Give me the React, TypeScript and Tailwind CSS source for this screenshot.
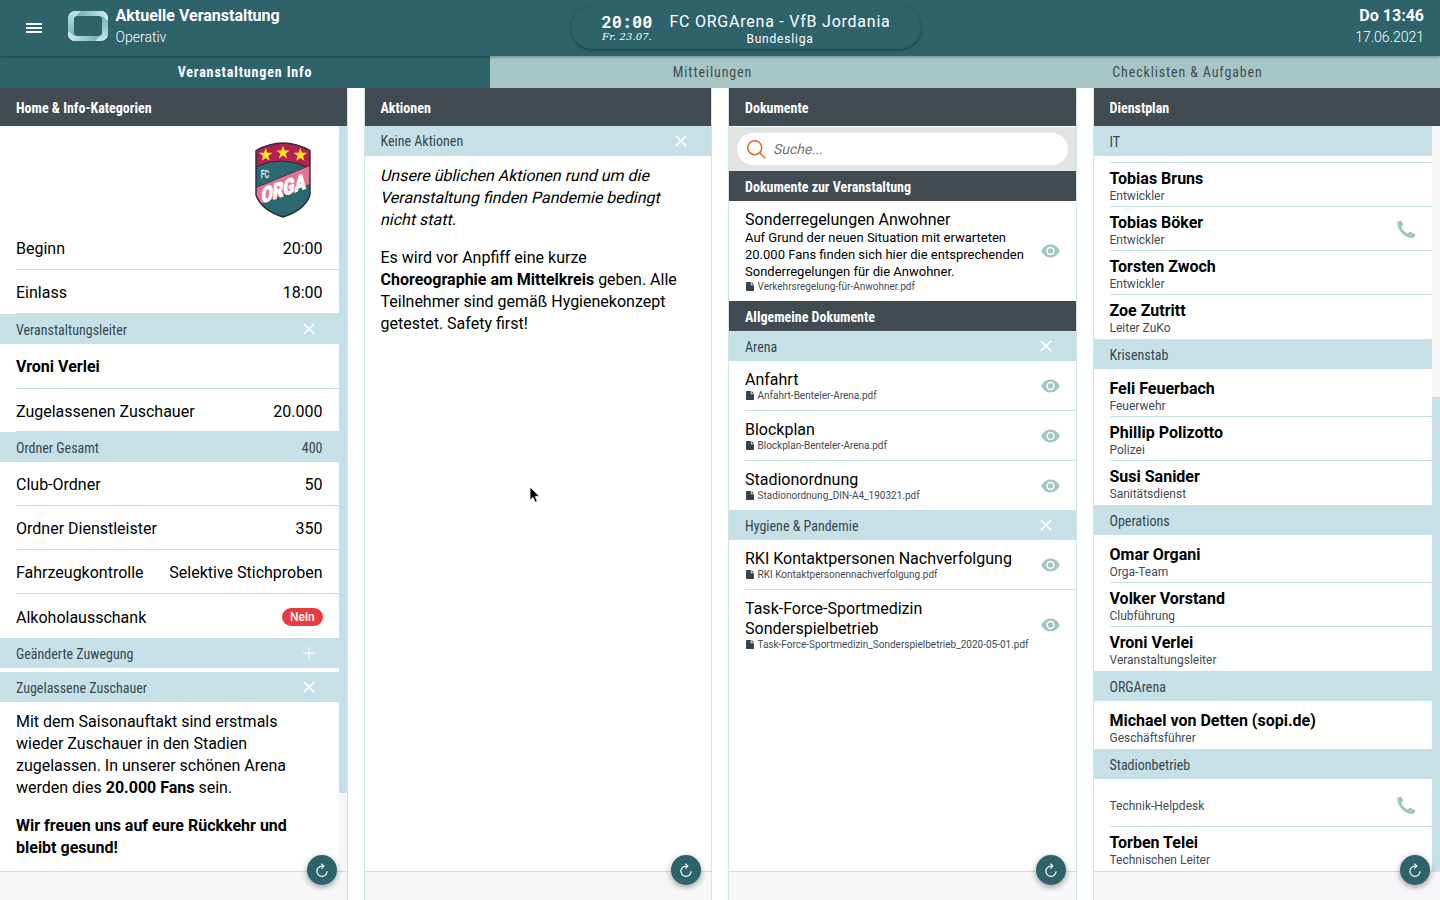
import React from "react";

const COND = "font-['Roboto_Condensed',Roboto,sans-serif] [font-stretch:75%]";

function Cross() {
  return (
    <svg width="12" height="12" viewBox="0 0 12 12" className="mr-[8px]" fill="none" stroke="#fff" strokeWidth="1.7">
      <path d="M.8.8l10.400 10.400M11.200.8L.8 11.200" />
    </svg>
  );
}

function Plus() {
  return (
    <svg width="12" height="12" viewBox="0 0 12 12" className="mr-[8px] mb-px" fill="none" stroke="#fff" strokeOpacity="0.85" strokeWidth="1.4">
      <path d="M6 0v12M0 6h12" />
    </svg>
  );
}

function Bar({ title, children, pt = "pt-[2px]" }: { title: string; children?: React.ReactNode; pt?: string }) {
  return (
    <div className="flex h-[30px] shrink-0 items-center justify-between bg-[#c5e1e7] pr-4 pl-(--inset) text-[14px] text-[#37474f]">
      <span className={`${COND} ${pt}`}>{title}</span>
      {children}
    </div>
  );
}

function DarkBar({ title }: { title: string }) {
  return (
    <div className={`flex h-[30px] shrink-0 items-center bg-[#424b52] pt-[2px] pl-4 text-[14px] font-bold text-white ${COND}`}>
      {title}
    </div>
  );
}

function Row({ label, value, h = "h-[44px]", pt = "pt-[2px]", bold, last }: { label: string; value?: React.ReactNode; h?: string; pt?: string; bold?: boolean; last?: boolean }) {
  return (
    <div className={`ml-4 flex shrink-0 items-center justify-between pr-[16.5px] ${pt} ${h} ${last ? "" : "border-b border-[#c5e3e3]"} ${bold ? "font-bold" : ""}`}>
      <span>{label}</span>
      <span>{value}</span>
    </div>
  );
}

function Eye() {
  return (
    <svg width="19" height="14" viewBox="0 0 19 14" className="mr-[16.5px] shrink-0">
      <path d="M.3 7C2.2 3 5.500.6 9.500.6S16.800 3 18.700 7c-1.900 4-5.200 6.400-9.200 6.400S2.200 11 .3 7z" fill="#a5c5c4" />
      <circle cx="9.500" cy="7" r="3.400" fill="none" stroke="#fff" strokeWidth="1.500" />
    </svg>
  );
}

function Phone() {
  return (
    <svg width="19" height="19" viewBox="0 0 19 19" className="mt-[8px] mr-[16.5px] shrink-0" fill="#a5c5c4">
      <path d="M1 1.600L3.100.6c.7-.3 1.400 0 1.700.7l1.300 3c.2.600 0 1.100-.4 1.500L4.400 7c1.100 2.600 3.300 5 6.200 6.400l1.600-1.200c.4-.3.900-.4 1.400-.2l4 1.800c.7.300 1 1.100.7 1.700l-.9 1.600c-.4.700-1.100 1-1.800 1C7.600 17.800.4 10.400.2 3.200c0-.7.200-1.300.8-1.600z" />
    </svg>
  );
}

function Doc({ title, text, file, h, last }: { title: string; text?: string; file: string; h: string; last?: boolean }) {
  return (
    <div className={`ml-4 flex shrink-0 items-center justify-between ${h} ${last ? "" : "border-b border-[#c5e3e3]"}`}>
      <div className="pt-px">
        <div className="max-w-[280px] leading-[20px]">{title}</div>
        {text && <div className="-mt-px mb-px w-[290px] text-[13px] leading-[17px]">{text}</div>}
        <div className="flex h-[12px] items-center text-[10px] leading-[12px] whitespace-nowrap text-[#424b52]">
          <svg width="8" height="9" viewBox="0 0 8 9" className="mr-[3.5px] mb-px ml-[1px] shrink-0" fill="#37434b">
            <path d="M.8 0h4v3.300H8v5.100c0 .4-.3.600-.6.600H.8C.3 9 0 8.700 0 8.300V.7C0 .3.300 0 .8 0zM5.600 0L8 2.500H5.600z" />
          </svg>
          {file}
        </div>
      </div>
      <Eye />
    </div>
  );
}

function Person({ name, role, phone, last, first, h = "h-[44px]" }: { name?: string; role: string; phone?: boolean; last?: boolean; first?: boolean; h?: string }) {
  return (
    <div className={`ml-4 flex shrink-0 items-start justify-between ${first ? "pt-[9px]" : "pt-[5px]"} ${h} ${last ? "" : "border-b border-[#c5e3e3]"}`}>
      <div className="-ml-[0.5px]">
        {name && <div className="-mb-[2px] leading-[22px] font-bold">{name}</div>}
        <div className={`text-[12px] leading-[16px] text-[#424b52] ${name ? "" : "mt-[10px]"}`}>{role}</div>
      </div>
      {phone && <Phone />}
    </div>
  );
}

function Column({ title, children, last, thumb, first, inset = "[--inset:16px]" }: { title: string; children: React.ReactNode; first?: boolean; last?: boolean; thumb?: React.ReactNode; inset?: string }) {
  return (
    <section className={`flex min-h-0 min-w-0 flex-col border-[#cfe6e6] bg-white ${inset} ${first ? "" : "border-l"} ${last ? "" : "border-r"}`}>
      <h2 className={`flex h-[38px] shrink-0 items-center bg-[#424b52] pt-[2px] pl-(--inset) text-[14px] font-bold text-white ${COND}`}>{title}</h2>
      <div className="flex h-[745px] shrink-0">
        <div className="flex min-w-0 flex-1 flex-col overflow-hidden">{children}</div>
        {thumb}
      </div>
      <footer className="flex flex-1 justify-end border-t border-[#c5e3e3] bg-[#f7f7fa] pr-[10px]">
        <button className="relative -top-[17px] flex size-[30px] items-center justify-center rounded-full bg-[#2f636c] shadow-[0_2px_6px_rgba(0,0,0,0.4)]">
          <svg width="14" height="14" viewBox="0 0 14 14" fill="none" stroke="#fff" strokeWidth="1.200">
            <path d="M7.900 3.100H7a5.100 5.100 0 1 0 5.100 5.100" />
            <path d="M6.300.6l2.500 2.500-2.500 2.500" />
          </svg>
        </button>
      </footer>
    </section>
  );
}

function Slanted({ children }: { children: React.ReactNode }) {
  return <span className="-ml-px block origin-[0_16px] -skew-x-[13deg]">{children}</span>;
}

function Crest() {
  return (
    <svg width="56" height="76" viewBox="0 0 56 76" className="overflow-visible">
      <defs>
        <clipPath id="shield">
          <path d="M1 8.500Q28-6.500 55 8.500V53Q50 68 28 75Q6 68 1 53z" />
        </clipPath>
      </defs>
      <g clipPath="url(#shield)">
        <path d="M0 0h56v76H0z" fill="#2b6871" />
        <path d="M0 0h56v27Q28 12 0 25z" fill="#b51f52" stroke="#262b35" strokeWidth="1" />
        <path d="M0 46L56 23V42L0 65z" fill="#e8718d" stroke="#3a3040" strokeWidth=".8" />
      </g>
      <path d="M1 8.500Q28-6.500 55 8.500V53Q50 68 28 75Q6 68 1 53z" fill="none" stroke="#25303a" strokeWidth="1.400" />
      <g fill="#ffe71a">
        <path id="star" d="M10.700 6l1.700 4.700 5 .1-4 3.100 1.400 4.800-4.100-2.800-4.100 2.800L8 13.900l-4-3.100 5-.1z" />
        <use href="#star" x="17.300" y="-2.300" />
        <use href="#star" x="34.600" />
      </g>
      <text x="5.700" y="35.500" fontSize="11" fill="#d7e6e8" stroke="#d7e6e8" strokeWidth=".3" textLength="8.500" lengthAdjust="spacingAndGlyphs" fontFamily="Roboto" fontWeight="500">FC</text>
      <text transform="translate(6.500 61.500) skewY(-19) skewX(-2)" fontSize="21.500" fill="#fff" stroke="#fff" strokeWidth=".9" textLength="44" lengthAdjust="spacingAndGlyphs" fontFamily="Roboto" fontWeight="900">ORGA</text>
    </svg>
  );
}

function BrandMark() {
  return (
    <svg width="40" height="30" viewBox="0 0 40 30">
      <defs>
        <linearGradient id="ga" x1="0" x2="1"><stop offset="0" stopColor="#6fabb6" /><stop offset="1" stopColor="#d0e9ee" /></linearGradient>
        <linearGradient id="gb" x1="1" x2="0"><stop offset="0" stopColor="#6fabb6" /><stop offset="1" stopColor="#d0e9ee" /></linearGradient>
        <linearGradient id="gc" x1="0" x2="0" y1="0" y2="1"><stop offset="0" stopColor="#75b0bb" /><stop offset="1" stopColor="#c4e3e9" /></linearGradient>
        <linearGradient id="gd" x1="0" x2="0" y1="0" y2="1"><stop offset="0" stopColor="#c4e3e9" /><stop offset="1" stopColor="#75b0bb" /></linearGradient>
        <clipPath id="ring"><path clipRule="evenodd" d="M7 0h26a7 7 0 0 1 7 7v16a7 7 0 0 1-7 7H7a7 7 0 0 1-7-7V7a7 7 0 0 1 7-7zM9 5a3 3 0 0 0-3 3v14a3 3 0 0 0 3 3h22a3 3 0 0 0 3-3V8a3 3 0 0 0-3-3z" /></clipPath>
      </defs>
      <g clipPath="url(#ring)">
        <path d="M0 0h40v30H0z" fill="#c4e3e9" />
        <path d="M13 0h27v10l-8-5H8z" fill="url(#ga)" />
        <path d="M34 5l6 5v13l-7 7-2-5 3-3z" fill="url(#gc)" />
        <path d="M27 30H0V20l8 5h24z" fill="url(#gb)" />
        <path d="M6 25l-6-5V7l7-7h6L6 7z" fill="url(#gd)" />
      </g>
    </svg>
  );
}

export default function App() {
  return (
    <div className="relative flex h-[900px] w-[1440px] flex-col overflow-hidden bg-white font-[Roboto,sans-serif] text-[16px] leading-[22px] text-black">
      <header className="relative z-10 flex h-[56px] shrink-0 bg-[#2f636c] text-white shadow-[0_1px_3px_rgba(0,0,0,0.35)]">
        <div className="flex w-[571px]">
          <svg width="16" height="12" viewBox="0 0 16 12" className="mt-[22px] ml-[26px]" fill="#fff">
            <path d="M0 1h16v2H0zM0 5h16v2H0zM0 9h16v2H0z" />
          </svg>
          <div className="mt-[11px] ml-[26px]"><BrandMark /></div>
          <div className="ml-[7.5px] pt-[5px]">
            <div className="leading-[22px] font-bold">Aktuelle Veranstaltung</div>
            <div className="text-[14px] leading-[20px] font-light">Operativ</div>
          </div>
        </div>
        <div className="mt-[6px] flex h-[43px] w-[350px] rounded-[22px] shadow-[0_1px_3px_rgba(0,0,0,0.45)]">
          <div className="ml-[29px] w-[54px] pt-[6px] text-center">
            <div className="font-['Roboto_Mono','Liberation_Mono',monospace] text-[17px] leading-[20px] font-bold">20:00</div>
            <div className="-mt-px font-['DejaVu_Serif',serif] text-[10px] leading-[12px] tracking-[0.1px] whitespace-nowrap italic">Fr. 23.07.</div>
          </div>
          <div className="ml-[12px] w-[228px] pt-[5px] text-center whitespace-nowrap">
            <div className="leading-[22px] tracking-[0.77px]">FC ORGArena - VfB Jordania</div>
            <div className="text-[12px] leading-[13px] tracking-[0.8px]">Bundesliga</div>
          </div>
        </div>
        <div className="ml-auto pt-[5px] pr-4 text-right">
          <div className="leading-[22px] font-bold">Do 13:46</div>
          <div className="text-[14px] leading-[20px] font-light">17.06.2021</div>
        </div>
      </header>

      <nav className={`flex h-[32px] shrink-0 items-center bg-[#a6c6c5] text-center text-[14px] leading-[32px] tracking-[0.87px] text-[#424b52] ${COND}`}>
        <span className="w-[490px] bg-[#2f636c] font-bold text-white">Veranstaltungen Info</span>
        <span className="w-[445px]">Mitteilungen</span>
        <span className="w-[505px]">Checklisten &amp; Aufgaben</span>
      </nav>

      <main className="grid min-h-0 flex-1 grid-cols-[348px_348px_349px_347px] gap-x-[16px]">
        <Column
          first
          title="Home & Info-Kategorien"
          thumb={<div className="w-2 bg-[#f7f7fa]"><div className="h-[667px] bg-[#c5e1e7]" /></div>}
        >
          <div className="flex h-[100px] shrink-0 justify-end pt-4 pr-[28px]"><Crest /></div>
          <Row label="Beginn" value="20:00" />
          <Row label="Einlass" value="18:00" />
          <Bar title="Veranstaltungsleiter"><Cross /></Bar>
          <Row label="Vroni Verlei" bold h="h-[45px]" />
          <Row label="Zugelassenen Zuschauer" value="20.000" h="h-[43px]" pt="pt-[4px]" />
          <Bar title="Ordner Gesamt"><span className={`pt-[2px] pr-[0.5px] ${COND}`}>400</span></Bar>
          <Row label="Club-Ordner" value="50" />
          <Row label="Ordner Dienstleister" value="350" />
          <Row label="Fahrzeugkontrolle" value="Selektive Stichproben" />
          <Row
            label="Alkoholausschank"
            last
            pt="pt-[4px]"
            value={<span className="-mr-[0.5px] mb-[2px] block h-[18px] rounded-full bg-[#ea3c40] px-[8.3px] text-[12px] leading-[19px] font-medium text-white">Nein</span>}
          />
          <Bar title="Geänderte Zuwegung"><Plus /></Bar>
          <div className="mt-[4px]"><Bar title="Zugelassene Zuschauer"><Cross /></Bar></div>
          <div className="px-4 pt-[9px]">
            <p>Mit dem Saisonauftakt sind erstmals<br />wieder Zuschauer in den Stadien<br />zugelassen. In unserer schönen Arena<br />werden dies <b>20.000 Fans</b> sein.</p>
            <p className="mt-4 font-bold">Wir freuen uns auf eure Rückkehr und<br />bleibt gesund!</p>
          </div>
        </Column>

        <Column title="Aktionen" inset="[--inset:15.5px]">
          <Bar title="Keine Aktionen" pt="pt-0"><Cross /></Bar>
          <div className="pt-[9px] pr-4 pl-(--inset)">
            <p>
              <Slanted>Unsere üblichen Aktionen rund um die</Slanted>
              <Slanted>Veranstaltung finden Pandemie bedingt</Slanted>
              <Slanted>nicht statt.</Slanted>
            </p>
            <p className="mt-4">Es wird vor Anpfiff eine kurze<br /><b>Choreographie am Mittelkreis</b> geben. Alle<br />Teilnehmer sind gemäß Hygienekonzept<br />getestet. Safety first!</p>
          </div>
        </Column>

        <Column title="Dokumente">
          <div className="mt-px h-[44px] shrink-0 bg-[#e3e3e3] px-2 pt-[6px]">
            <div className="flex h-[32px] items-center rounded-full bg-white pl-[10px]">
              <svg width="19" height="19" viewBox="0 0 19 19" fill="none" stroke="#d9702f" strokeWidth="1.500">
                <circle cx="7.700" cy="7.700" r="7" />
                <path d="M12.700 12.700l5.500 5.500" />
              </svg>
              <span className="ml-[7.5px] text-[14px] text-[#757575]"><Slanted>Suche...</Slanted></span>
            </div>
          </div>
          <DarkBar title="Dokumente zur Veranstaltung" />
          <Doc h="h-[100px]" last title="Sonderregelungen Anwohner" text="Auf Grund der neuen Situation mit erwarteten 20.000 Fans finden sich hier die entsprechenden Sonderregelungen für die Anwohner." file="Verkehrsregelung-für-Anwohner.pdf" />
          <DarkBar title="Allgemeine Dokumente" />
          <Bar title="Arena"><Cross /></Bar>
          <Doc h="h-[50px]" title="Anfahrt" file="Anfahrt-Benteler-Arena.pdf" />
          <Doc h="h-[50px]" title="Blockplan" file="Blockplan-Benteler-Arena.pdf" />
          <Doc h="h-[49px]" last title="Stadionordnung" file="Stadionordnung_DIN-A4_190321.pdf" />
          <Bar title="Hygiene & Pandemie"><Cross /></Bar>
          <Doc h="h-[50px]" title="RKI Kontaktpersonen Nachverfolgung" file="RKI Kontaktpersonennachverfolgung.pdf" />
          <Doc h="h-[69px]" last title="Task-Force-Sportmedizin Sonderspielbetrieb" file="Task-Force-Sportmedizin_Sonderspielbetrieb_2020-05-01.pdf" />
        </Column>

        <Column
          last
          title="Dienstplan"
          inset="[--inset:15.5px]"
          thumb={<div className="w-2 bg-[#f7f7fa] pt-[271px]"><div className="h-[474px] bg-[#c5e1e7]" /></div>}
        >
          <Bar title="IT" />
          <div className="ml-4 h-[7px] shrink-0 border-b border-[#c5e3e3]" />
          <Person name="Tobias Bruns" role="Entwickler" />
          <Person name="Tobias Böker" role="Entwickler" phone />
          <Person name="Torsten Zwoch" role="Entwickler" />
          <Person name="Zoe Zutritt" role="Leiter ZuKo" last />
          <Bar title="Krisenstab" />
          <Person name="Feli Feuerbach" role="Feuerwehr" first h="h-[48px]" />
          <Person name="Phillip Polizotto" role="Polizei" />
          <Person name="Susi Sanider" role="Sanitätsdienst" last />
          <Bar title="Operations" />
          <Person name="Omar Organi" role="Orga-Team" first h="h-[48px]" />
          <Person name="Volker Vorstand" role="Clubführung" />
          <Person name="Vroni Verlei" role="Veranstaltungsleiter" last />
          <Bar title="ORGArena" />
          <Person name="Michael von Detten (sopi.de)" role="Geschäftsführer" last first h="h-[48px]" />
          <Bar title="Stadionbetrieb" />
          <Person role="Technik-Helpdesk" phone first h="h-[48px]" />
          <Person name="Torben Telei" role="Technischen Leiter" last h="h-[45px]" />
        </Column>
      </main>

      <svg width="12" height="18" viewBox="0 0 12 18" className="absolute top-[486px] left-[529px]">
        <path d="M1 1v13.200l3.100-2.900 2 4.900 2.200-.9-2-4.700h4.300z" fill="#000" stroke="#fff" strokeWidth=".8" />
      </svg>
    </div>
  );
}
